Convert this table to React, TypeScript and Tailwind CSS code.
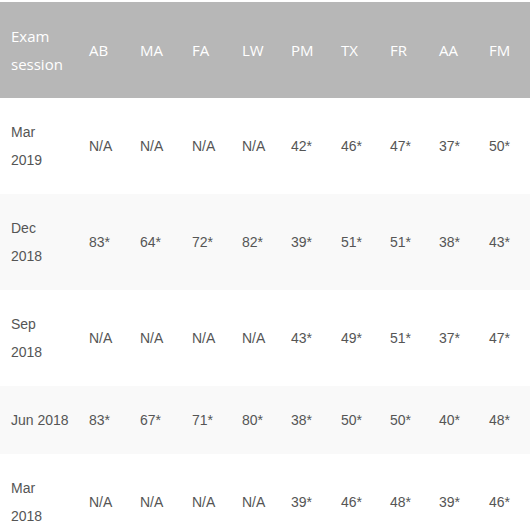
import React from "react";

const cols = ["AB", "MA", "FA", "LW", "PM", "TX", "FR", "AA", "FM"];
const widths = ["w-[79px]", "w-[51px]", "w-[52px]", "w-[50px]", "w-[49px]", "w-[50px]", "w-[49px]", "w-[49px]", "w-[50px]", "w-[51px]"];

const rows: { s: string[]; v: string[] }[] = [
  { s: ["Mar", "2019"], v: ["N/A", "N/A", "N/A", "N/A", "42*", "46*", "47*", "37*", "50*"] },
  { s: ["Dec", "2018"], v: ["83*", "64*", "72*", "82*", "39*", "51*", "51*", "38*", "43*"] },
  { s: ["Sep", "2018"], v: ["N/A", "N/A", "N/A", "N/A", "43*", "49*", "51*", "37*", "47*"] },
  { s: ["Jun 2018"], v: ["83*", "67*", "71*", "80*", "38*", "50*", "50*", "40*", "48*"] },
  { s: ["Mar", "2018"], v: ["N/A", "N/A", "N/A", "N/A", "39*", "46*", "48*", "39*", "46*"] },
];

export default function App() {
  return (
    <div className="w-[531px] h-[531px] overflow-hidden bg-white pt-[2px]">
      <table className="table-fixed border-collapse w-[530px]">
        <colgroup>
          {widths.slice(0, 10).map((w, i) => (
            <col key={i} className={w} />
          ))}
        </colgroup>
        <thead>
          <tr className="bg-[#b7b7b7] text-white font-['Open_Sans',sans-serif] text-[15px] leading-[28px]">
            <th className="text-left font-normal py-5 pl-[11px] pr-2 align-middle">
              Exam
              <br />
              session
            </th>
            {cols.map((c) => (
              <th key={c} className="text-left font-normal py-5 pl-[10px] align-middle">
                {c}
              </th>
            ))}
          </tr>
        </thead>
        <tbody className="font-['Liberation_Sans',Arial,sans-serif] text-[14px] leading-[28px] text-[#555555]">
          {rows.map((r, i) => (
            <tr key={i} className={i % 2 === 1 ? "bg-[#f9f9f9]" : "bg-white"}>
              <td className="py-5 pl-[11px] pr-1 align-middle whitespace-nowrap">
                {r.s.length === 2 ? (
                  <>
                    {r.s[0]}
                    <br />
                    {r.s[1]}
                  </>
                ) : (
                  r.s[0]
                )}
              </td>
              {r.v.map((v, j) => (
                <td key={j} className="py-5 pl-[10px] align-middle whitespace-nowrap">
                  {v}
                </td>
              ))}
            </tr>
          ))}
        </tbody>
      </table>
    </div>
  );
}
